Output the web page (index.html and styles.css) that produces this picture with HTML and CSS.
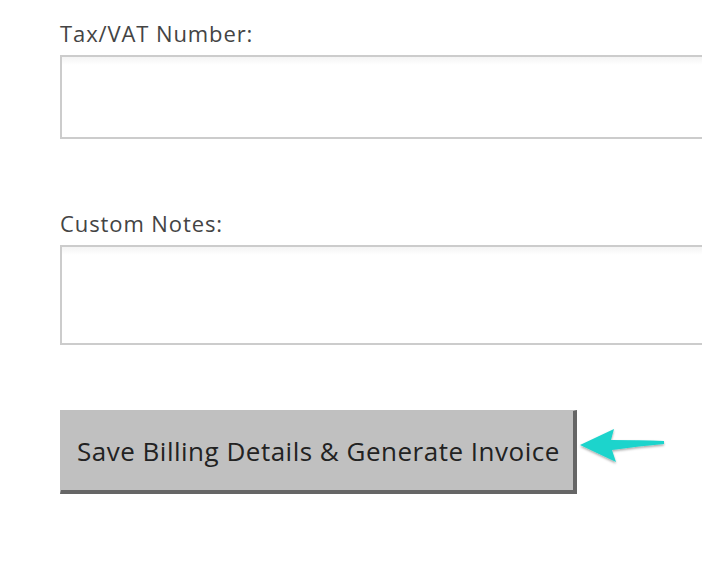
FILE: index.html
```html
<!DOCTYPE html>
<html>
<head>
<meta charset="utf-8">
<link rel="stylesheet" href="styles.css">
</head>
<body>
<form class="form">
  <div class="field">
    <label class="label">Tax/VAT Number:</label>
    <div class="input input-tax"></div>
  </div>
  <div class="field field-notes">
    <label class="label">Custom Notes:</label>
    <div class="input input-notes"></div>
  </div>
  <div class="actions">
    <button type="button" class="btn">Save Billing Details &amp; Generate Invoice</button>
    <svg class="arrow" width="90" height="40" viewBox="0 0 90 40">
      <defs>
        <filter id="sh" x="-20%" y="-20%" width="140%" height="160%">
          <feDropShadow dx="0" dy="1.5" stdDeviation="1.2" flood-color="#000" flood-opacity="0.35"/>
        </filter>
      </defs>
      <path d="M2 19 L36 3 L33 14 Q62 14 86 15 L86 18 Q62 20 34 24 L38 36 Z" fill="#1ed4cc" filter="url(#sh)"/>
    </svg>
  </div>
</form>
</body>
</html>
```
FILE: styles.css
```css
html, body {
  margin: 0;
  padding: 0;
  background: #fff;
  overflow: hidden;
}
body {
  font-family: "Open Sans", "Liberation Sans", sans-serif;
  color: #444;
}
.form {
  padding: 19px 0 0 60px;
}
.field {
  display: flex;
  flex-direction: column;
}
.field-notes {
  margin-top: 70px;
}
.label {
  font-size: 22px;
  letter-spacing: 0.9px;
  line-height: 28px;
  height: 28px;
  margin-bottom: 8px;
  color: #444;
}
.input {
  box-sizing: border-box;
  border: 2px solid #cccccc;
  border-right: none;
  background: linear-gradient(#f4f4f4, #fff 8px);
}
.input-tax {
  height: 84px;
}
.input-notes {
  height: 100px;
}
.actions {
  margin-top: 65px;
  display: flex;
  align-items: center;
}
.btn {
  box-sizing: border-box;
  height: 84px;
  width: 517px;
  background: #c0c0c0;
  border-style: solid;
  border-width: 1px 4px 4px 1px;
  border-color: #c0c0c0 #666 #666 #c0c0c0;
  font-family: "Open Sans", "Liberation Sans", sans-serif;
  font-size: 26px;
  letter-spacing: 0.5px;
  color: #222;
  padding: 0 0 0 16px;
  margin: 0;
  text-align: left;
}
.arrow {
  margin-left: 1px;
  margin-top: -12px;
}
```
